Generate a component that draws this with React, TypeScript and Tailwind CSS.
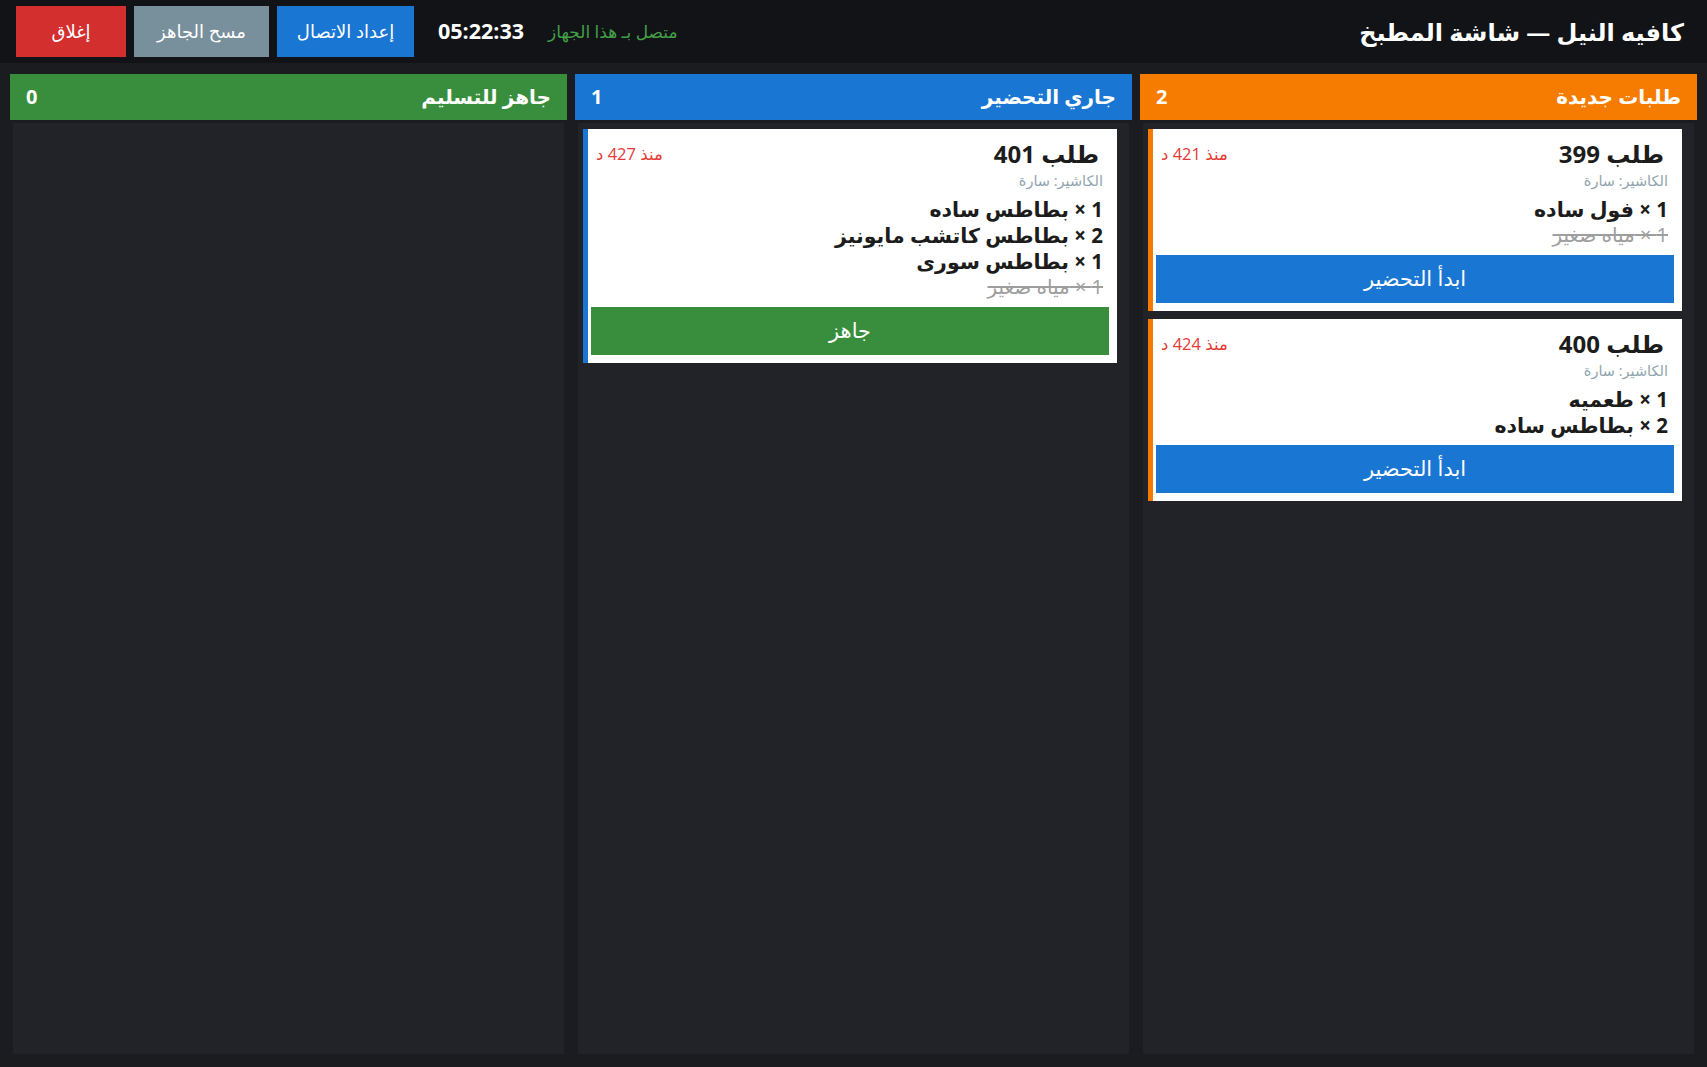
import { ReactNode } from 'react';

type Item = { qty: number; name: string; done?: boolean };

type Order = {
  id: number;
  minutes: number;
  cashier: string;
  items: Item[];
};

type Column = {
  key: string;
  title: string;
  headerClass: string;
  borderClass: string;
  action?: { label: string; className: string };
  orders: Order[];
};

const COLUMNS: Column[] = [
  {
    key: 'new',
    title: 'طلبات جديدة',
    headerClass: 'bg-[#f57c00]',
    borderClass: 'border-[#f57c00]',
    action: { label: 'ابدأ التحضير', className: 'bg-[#1976d2]' },
    orders: [
      {
        id: 399,
        minutes: 421,
        cashier: 'سارة',
        items: [
          { qty: 1, name: 'فول ساده' },
          { qty: 1, name: 'مياه صغير', done: true },
        ],
      },
      {
        id: 400,
        minutes: 424,
        cashier: 'سارة',
        items: [
          { qty: 1, name: 'طعميه' },
          { qty: 2, name: 'بطاطس ساده' },
        ],
      },
    ],
  },
  {
    key: 'preparing',
    title: 'جاري التحضير',
    headerClass: 'bg-[#1976d2]',
    borderClass: 'border-[#1976d2]',
    action: { label: 'جاهز', className: 'bg-[#388e3c]' },
    orders: [
      {
        id: 401,
        minutes: 427,
        cashier: 'سارة',
        items: [
          { qty: 1, name: 'بطاطس ساده' },
          { qty: 2, name: 'بطاطس كاتشب مايونيز' },
          { qty: 1, name: 'بطاطس سورى' },
          { qty: 1, name: 'مياه صغير', done: true },
        ],
      },
    ],
  },
  {
    key: 'ready',
    title: 'جاهز للتسليم',
    headerClass: 'bg-[#388e3c]',
    borderClass: 'border-[#388e3c]',
    orders: [],
  },
];

function HeaderButton({ className, children }: { className: string; children: ReactNode }) {
  return (
    <button className={`h-[51px] text-white text-[18px] flex items-center justify-center ${className}`}>
      {children}
    </button>
  );
}

function OrderCard({ order, column }: { order: Order; column: Column }) {
  return (
    <div className={`bg-white border-l-[5px] ${column.borderClass} pt-[10px] pb-2 pl-[3px] pr-2`}>
      <div className="pl-[5px] pr-[6px]">
        {/* Order number + elapsed time */}
        <div className="flex items-center justify-between">
          <h3 className="text-[24px] leading-[30px] font-bold text-[#1c1c1c] ps-1">طلب {order.id}</h3>
          <span className="text-[16.5px] text-[#e53935]">منذ {order.minutes} د</span>
        </div>
        <p className="mt-[2px] text-[14.5px] leading-[20px] text-[#90a4ae]">الكاشير: {order.cashier}</p>

        {/* Line items */}
        <ul className="mt-[5px]">
          {order.items.map((item, idx) => (
            <li
              key={idx}
              className={
                item.done
                  ? 'text-[20px] leading-[26px] text-[#9e9e9e] line-through'
                  : 'text-[20.5px] leading-[26px] font-bold text-[#1c1c1c]'
              }
            >
              {item.qty} × {item.name}
            </li>
          ))}
        </ul>
      </div>

      {column.action && (
        <button
          className={`mt-[7px] w-full h-[48px] text-white text-[21px] flex items-center justify-center ${column.action.className}`}
        >
          {column.action.label}
        </button>
      )}
    </div>
  );
}

export default function App() {
  return (
    <div
      dir="rtl"
      className="h-screen flex flex-col bg-[#1b1c20] font-['Open_Sans','DejaVu_Sans',sans-serif]"
    >
      {/* Top bar */}
      <header className="h-[63px] shrink-0 bg-[#111317] flex items-center justify-between pl-4 pr-[23px]">
        <h1 className="text-[24px] font-bold text-white">كافيه النيل — شاشة المطبخ</h1>
        <div className="flex items-center gap-6">
          <span className="text-[17px] text-[#43a047] ms-[3px]">متصل بـ هذا الجهاز</span>
          <span className="text-[21.5px] font-bold text-white" dir="ltr">05:22:33</span>
          <div className="flex items-center gap-2">
            <HeaderButton className="w-[137px] bg-[#1976d2]">إعداد الاتصال</HeaderButton>
            <HeaderButton className="w-[135px] bg-[#78909c]">مسح الجاهز</HeaderButton>
            <HeaderButton className="w-[110px] bg-[#d32f2f]">إغلاق</HeaderButton>
          </div>
        </div>
      </header>

      {/* Kanban columns */}
      <main className="flex-1 min-h-0 grid grid-cols-3 gap-2 px-[10px] pt-[11px] pb-[10px]">
        {COLUMNS.map((column) => (
          <section key={column.key} className="flex flex-col min-h-0">
            <div
              className={`h-[46px] shrink-0 flex items-center justify-between px-4 text-white text-[20px] font-bold ${column.headerClass}`}
            >
              <span>{column.title}</span>
              <span>{column.orders.length}</span>
            </div>
            <div className="flex-1 min-h-0 m-[3px] bg-[#212328] pt-[6px] pl-[5px] pr-[12px] flex flex-col gap-2 overflow-hidden">
              {column.orders.map((order) => (
                <OrderCard key={order.id} order={order} column={column} />
              ))}
            </div>
          </section>
        ))}
      </main>
    </div>
  );
}
